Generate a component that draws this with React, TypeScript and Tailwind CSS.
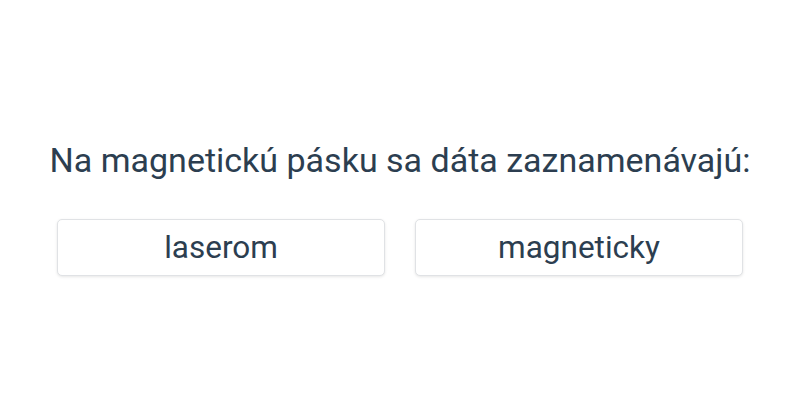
export default function App() {
  const options = ["laserom", "magneticky"]
  return (
    <div className="w-[800px] h-[400px] bg-white flex flex-col items-center pt-[143px] text-[#2c3e50]" style={{ fontFamily: "Roboto, sans-serif" }}>
      <h1 className="text-[34px] leading-none font-normal">Na magnetickú pásku sa dáta zaznamenávajú:</h1>
      <div className="flex gap-[30px] mt-[42px]">
        {options.map((o) => (
          <button
            key={o}
            className="w-[328px] h-[57px] bg-white border border-[#e0e2e5] rounded-[5px] shadow-[0_1px_3px_rgba(0,0,0,0.1)] text-[31.5px] text-[#2c3e50]"
          >
            {o}
          </button>
        ))}
      </div>
    </div>
  )
}
